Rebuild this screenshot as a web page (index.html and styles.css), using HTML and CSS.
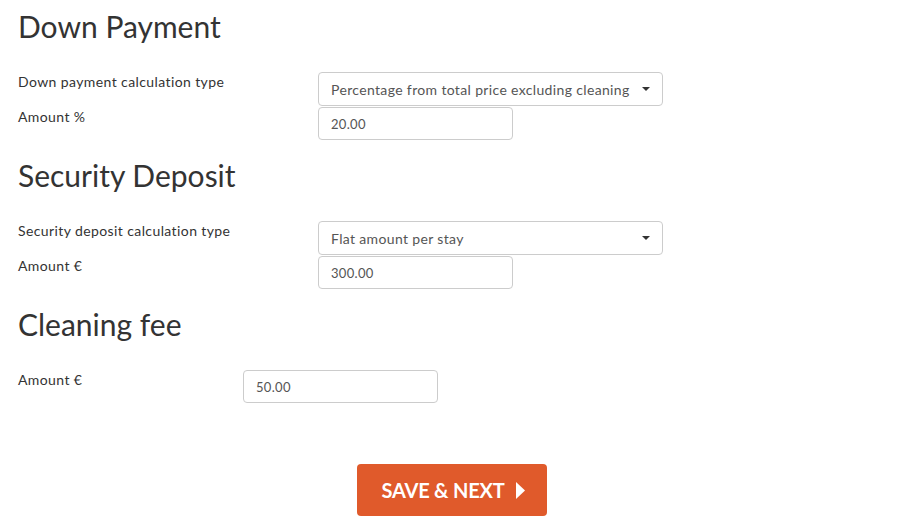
FILE: index.html
```html
<!DOCTYPE html>
<html lang="en">
<head>
    <meta charset="UTF-8">
    <meta name="viewport" content="width=device-width, initial-scale=1.0">
    <title>Deposits and fees</title>
    <link rel="stylesheet" href="styles.css">
</head>
<body>

    <div class="page">
        <!-- Down payment -->
        <div class="section">
            <h2>Down Payment</h2>
            <div class="row first">
                <label class="label">Down payment calculation type</label>
                <div class="select select-wide">
                    <span class="select-text">Percentage from total price excluding cleaning</span>
                    <span class="caret"></span>
                </div>
            </div>
            <div class="row">
                <label class="label">Amount %</label>
                <input class="input" type="text" value="20.00">
            </div>
        </div>

        <!-- Security deposit -->
        <div class="section">
            <h2>Security Deposit</h2>
            <div class="row first">
                <label class="label">Security deposit calculation type</label>
                <div class="select select-wide">
                    <span class="select-text">Flat amount per stay</span>
                    <span class="caret"></span>
                </div>
            </div>
            <div class="row">
                <label class="label">Amount €</label>
                <input class="input" type="text" value="300.00">
            </div>
        </div>

        <!-- Cleaning fee -->
        <div class="section">
            <h2>Cleaning fee</h2>
            <div class="row first cleaning">
                <label class="label">Amount €</label>
                <input class="input" type="text" value="50.00">
            </div>
        </div>

        <div class="actions">
            <button class="btn-save">SAVE &amp; NEXT
                <svg width="9" height="17" viewBox="0 0 9 17"><path d="M0 0 L9 8.5 L0 17 Z" fill="#fff"/></svg>
            </button>
        </div>
    </div>

</body>
</html>
```

FILE: styles.css
```css
body {
    font-family: "Lato", "Open Sans", sans-serif;
    color: #333;
    margin: 0;
    padding: 0;
    background: #fff;
}
.page {
    padding: 0 18px;
}
.section h2 {
    font-size: 30px;
    font-weight: 400;
    line-height: 33px;
    margin: 0;
    padding-top: 10px;
}
.section + .section h2 {
    padding-top: 19px;
}
.row {
    display: flex;
    align-items: flex-start;
    margin-top: 1px;
}
.row.first {
    margin-top: 29px;
}
.label {
    width: 300px;
    flex-shrink: 0;
    font-size: 14px;
    line-height: 20px;
    letter-spacing: 0.4px;
}
.cleaning .label {
    width: 225px;
}
.select {
    display: flex;
    align-items: center;
    justify-content: space-between;
    box-sizing: border-box;
    height: 34px;
    padding: 0 12px 0 12px;
    border: 1px solid #ccc;
    border-radius: 4px;
    font-size: 14px;
    letter-spacing: 0.35px;
    color: #555;
}
.select-text {
    white-space: nowrap;
}
.select-wide {
    width: 345px;
}
.caret {
    flex-shrink: 0;
    width: 0;
    height: 0;
    border-left: 4px solid transparent;
    border-right: 4px solid transparent;
    border-top: 4px solid #333;
    margin-left: 8px;
}
.input {
    box-sizing: border-box;
    width: 195px;
    height: 33px;
    padding: 0 12px;
    border: 1px solid #ccc;
    border-radius: 4px;
    font-family: inherit;
    font-size: 13px;
    letter-spacing: 0.3px;
    color: #555;
    outline: none;
}
.actions {
    display: flex;
    justify-content: center;
    margin-top: 61px;
    padding-left: 7px;
}
.btn-save {
    display: flex;
    align-items: center;
    justify-content: center;
    gap: 11px;
    height: 52px;
    width: 190px;
    padding: 0 0 0 2px;
    background: #e05a2b;
    color: #fff;
    border: none;
    border-radius: 4px;
    font-family: inherit;
    font-size: 20px;
    font-weight: 700;
    letter-spacing: -0.2px;
}
```
